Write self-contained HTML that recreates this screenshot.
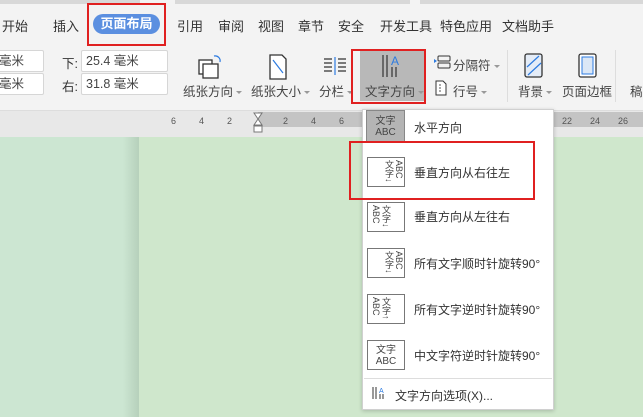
<!DOCTYPE html>
<html><head><meta charset="utf-8"><style>
*{margin:0;padding:0;box-sizing:border-box}
body{width:643px;height:417px;overflow:hidden;position:relative;background:#f3f3f3;font-family:"Liberation Sans","Noto Sans CJK SC",sans-serif;color:#333;font-size:12px}
.a{position:absolute;white-space:nowrap}
.tab{position:absolute;top:16px;font-size:13px;color:#333}
.inp{position:absolute;background:#fff;border:1px solid #d6d6d6;border-radius:2px;height:22px;font-size:12.5px;line-height:20px;padding-left:4px;color:#444}
.lbl{position:absolute;font-size:12.5px;color:#444;top:81px}
.caret{display:inline-block;width:0;height:0;border-left:3px solid transparent;border-right:3px solid transparent;border-top:3px solid #999;margin-left:3px;vertical-align:middle}
.rn{position:absolute;top:116px;font-size:9px;color:#555}
.mi{position:absolute;left:414px;font-size:12px;color:#333}
.ic{position:absolute;left:367px;width:38px;height:30px;border:1px solid #777;background:#fff;font-size:9px;line-height:9px;color:#444}
.v{font-size:9px;line-height:10px}
</style></head><body>
<div class="a" style="left:0;top:0;width:140px;height:4px;background:#d8d8d8"></div>
<div class="a" style="left:175px;top:0;width:235px;height:4px;background:#d8d8d8"></div>
<div class="a" style="left:420px;top:0;width:223px;height:4px;background:#d8d8d8"></div>

<div class="tab" style="left:2px">开始</div>
<div class="tab" style="left:53px">插入</div>
<div class="a" style="left:93px;top:14px;width:67px;height:20px;border-radius:10px;background:#5b8fe0;color:#fff;font-size:13px;font-weight:bold;text-align:center;line-height:20px">页面布局</div>
<div class="a" style="left:87px;top:3px;width:79px;height:43px;border:2px solid #e02020"></div>
<div class="tab" style="left:177px">引用</div>
<div class="tab" style="left:218px">审阅</div>
<div class="tab" style="left:258px">视图</div>
<div class="tab" style="left:298px">章节</div>
<div class="tab" style="left:338px">安全</div>
<div class="tab" style="left:380px">开发工具</div>
<div class="tab" style="left:440px">特色应用</div>
<div class="tab" style="left:502px">文档助手</div>

<div class="inp" style="left:-2px;top:50px;width:46px;padding-left:0">毫米</div>
<div class="inp" style="left:-2px;top:73px;width:46px;padding-left:0">毫米</div>
<div class="a" style="left:62px;top:53px;font-size:12.5px">下:</div>
<div class="a" style="left:62px;top:76px;font-size:12.5px">右:</div>
<div class="inp" style="left:81px;top:50px;width:87px">25.4 毫米</div>
<div class="inp" style="left:81px;top:73px;width:87px">31.8 毫米</div>

<svg class="a" style="left:196px;top:53px" width="30" height="28"><rect x="3" y="7" width="13" height="14" fill="#fff" stroke="#333" stroke-width="1.3"/><rect x="7" y="11" width="15" height="14" fill="#fff" stroke="#333" stroke-width="1.3"/><path d="M18 3 a5 5 0 0 1 6 6" fill="none" stroke="#2d7be0" stroke-width="1.2"/></svg>
<div class="lbl" style="left:183px">纸张方向<span class="caret"></span></div>
<svg class="a" style="left:268px;top:53px" width="20" height="28"><path d="M2 2 h12 l4 4 v20 h-16z" fill="#fff" stroke="#333" stroke-width="1.3"/><path d="M5 7 L15 20" stroke="#2d7be0" stroke-width="1.2"/></svg>
<div class="lbl" style="left:251px">纸张大小<span class="caret"></span></div>
<svg class="a" style="left:322px;top:56px" width="28" height="20"><g stroke="#333" stroke-width="1.2"><path d="M2 3h8M2 7h8M2 11h8M2 15h8M16 3h8M16 7h8M16 11h8M16 15h8"/></g><path d="M13 1v18" stroke="#2d7be0" stroke-width="1.2"/></svg>
<div class="lbl" style="left:319px">分栏<span class="caret"></span></div>

<div class="a" style="left:360px;top:50px;width:64px;height:51px;background:#b8b8b8"></div>
<svg class="a" style="left:380px;top:53px" width="26" height="26"><g stroke="#333" stroke-width="1.2"><path d="M3 2v22M7 2v22M12 14v10M16 14v10"/></g><text x="11" y="12" font-size="12" fill="#2d7be0" font-family="Liberation Sans">A</text></svg>
<div class="lbl" style="left:365px">文字方向<span class="caret"></span></div>
<div class="a" style="left:351px;top:49px;width:75px;height:55px;border:2px solid #e02020"></div>

<svg class="a" style="left:433px;top:55px" width="18" height="14"><path d="M1 4l3 2-3 2z" fill="#2d7be0"/><rect x="5" y="1" width="12" height="5" rx="1" fill="none" stroke="#333"/><rect x="5" y="8" width="12" height="5" rx="1" fill="none" stroke="#333"/></svg>
<div class="a" style="left:453px;top:55px;font-size:12.5px;color:#444">分隔符<span class="caret"></span></div>
<svg class="a" style="left:435px;top:80px" width="12" height="16"><path d="M1 1h7l3 3v11h-10z" fill="#fff" stroke="#333"/><path d="M4 5h2M4 8h2M4 11h2" stroke="#555"/></svg>
<div class="a" style="left:453px;top:81px;font-size:12.5px;color:#444">行号<span class="caret"></span></div>
<div class="a" style="left:507px;top:50px;width:1px;height:52px;background:#ddd"></div>
<svg class="a" style="left:524px;top:53px" width="20" height="26"><rect x="1" y="1" width="17" height="23" rx="2" fill="#e4ecf7" stroke="#333" stroke-width="1.3"/><path d="M3 14L15 3M4 22L17 10" stroke="#2d7be0" stroke-width="1.2"/></svg>
<div class="lbl" style="left:518px">背景<span class="caret"></span></div>
<svg class="a" style="left:577px;top:53px" width="22" height="26"><rect x="2" y="1" width="17" height="23" rx="2" fill="#fff" stroke="#333" stroke-width="1.3"/><rect x="5" y="4" width="11" height="17" fill="#dbe7f6" stroke="#2d7be0"/></svg>
<div class="lbl" style="left:562px">页面边框</div>
<div class="a" style="left:615px;top:50px;width:1px;height:52px;background:#ddd"></div>
<div class="lbl" style="left:630px">稿</div>

<div class="a" style="left:0;top:110px;width:643px;height:27px;background:#e8e8e8;border-top:1px solid #ddd"></div>
<div class="a" style="left:258px;top:112px;width:385px;height:15px;background:#c4c4c4"></div>
<div class="rn" style="left:171px">6</div><div class="rn" style="left:199px">4</div><div class="rn" style="left:227px">2</div>
<div class="rn" style="left:283px">2</div><div class="rn" style="left:311px">4</div><div class="rn" style="left:339px">6</div>
<div class="rn" style="left:562px">22</div><div class="rn" style="left:590px">24</div><div class="rn" style="left:618px">26</div>
<svg class="a" style="left:253px;top:112px" width="11" height="22"><path d="M1 1h8l-4 6z M1 13h8l-4 -6z" fill="#fff" stroke="#777"/><rect x="1" y="14" width="8" height="6" fill="#fff" stroke="#777"/></svg>

<div class="a" style="left:0;top:137px;width:139px;height:280px;background:linear-gradient(to right,#cce6d2 0,#cce6d2 123px,#b6d0bb 139px)"></div>
<div class="a" style="left:139px;top:137px;width:504px;height:280px;background:#cfe7cc"></div>

<div class="a" style="left:362px;top:109px;width:192px;height:301px;background:#fff;border:1px solid #d0d0d0;box-shadow:0 1px 4px rgba(0,0,0,.2)"></div>
<div class="ic" style="left:366px;top:110px;width:39px;height:33px;background:#b4b4b4;border-color:#888;padding-top:5px;text-align:center;font-size:10px;line-height:11px">文字<br>ABC</div>
<div class="mi" style="top:119px">水平方向</div>
<div class="ic v" style="top:157px;padding:2px 0 0 17px;writing-mode:vertical-rl">ABC 文字↓</div>
<div class="mi" style="top:164px">垂直方向从右往左</div>
<div class="ic v" style="top:202px;padding:2px 0 0 3px;writing-mode:vertical-lr">ABC 文字↓</div>
<div class="mi" style="top:208px">垂直方向从左往右</div>
<div class="ic v" style="top:248px;padding:2px 0 0 12px;writing-mode:vertical-rl">ABC 文字↓</div>
<div class="mi" style="top:255px">所有文字顺时针旋转90°</div>
<div class="ic v" style="top:294px;padding:2px 0 0 3px;writing-mode:vertical-lr">ABC 文字↑</div>
<div class="mi" style="top:301px">所有文字逆时针旋转90°</div>
<div class="ic" style="top:340px;padding-top:4px;text-align:center;font-size:10px;line-height:11px">文字<br>ABC</div>
<div class="mi" style="top:347px">中文字符逆时针旋转90°</div>
<div class="a" style="left:364px;top:378px;width:188px;height:1px;background:#ddd"></div>
<svg class="a" style="left:371px;top:386px" width="14" height="14"><g stroke="#333"><path d="M2 1v12M5 1v12M9 8v5M12 8v5"/></g><text x="8" y="7" font-size="7" fill="#2d7be0">A</text></svg>
<div class="a" style="left:395px;top:387px;font-size:12px">文字方向选项(X)...</div>

<div class="a" style="left:349px;top:141px;width:186px;height:59px;border:2px solid #e02020"></div>
</body></html>
